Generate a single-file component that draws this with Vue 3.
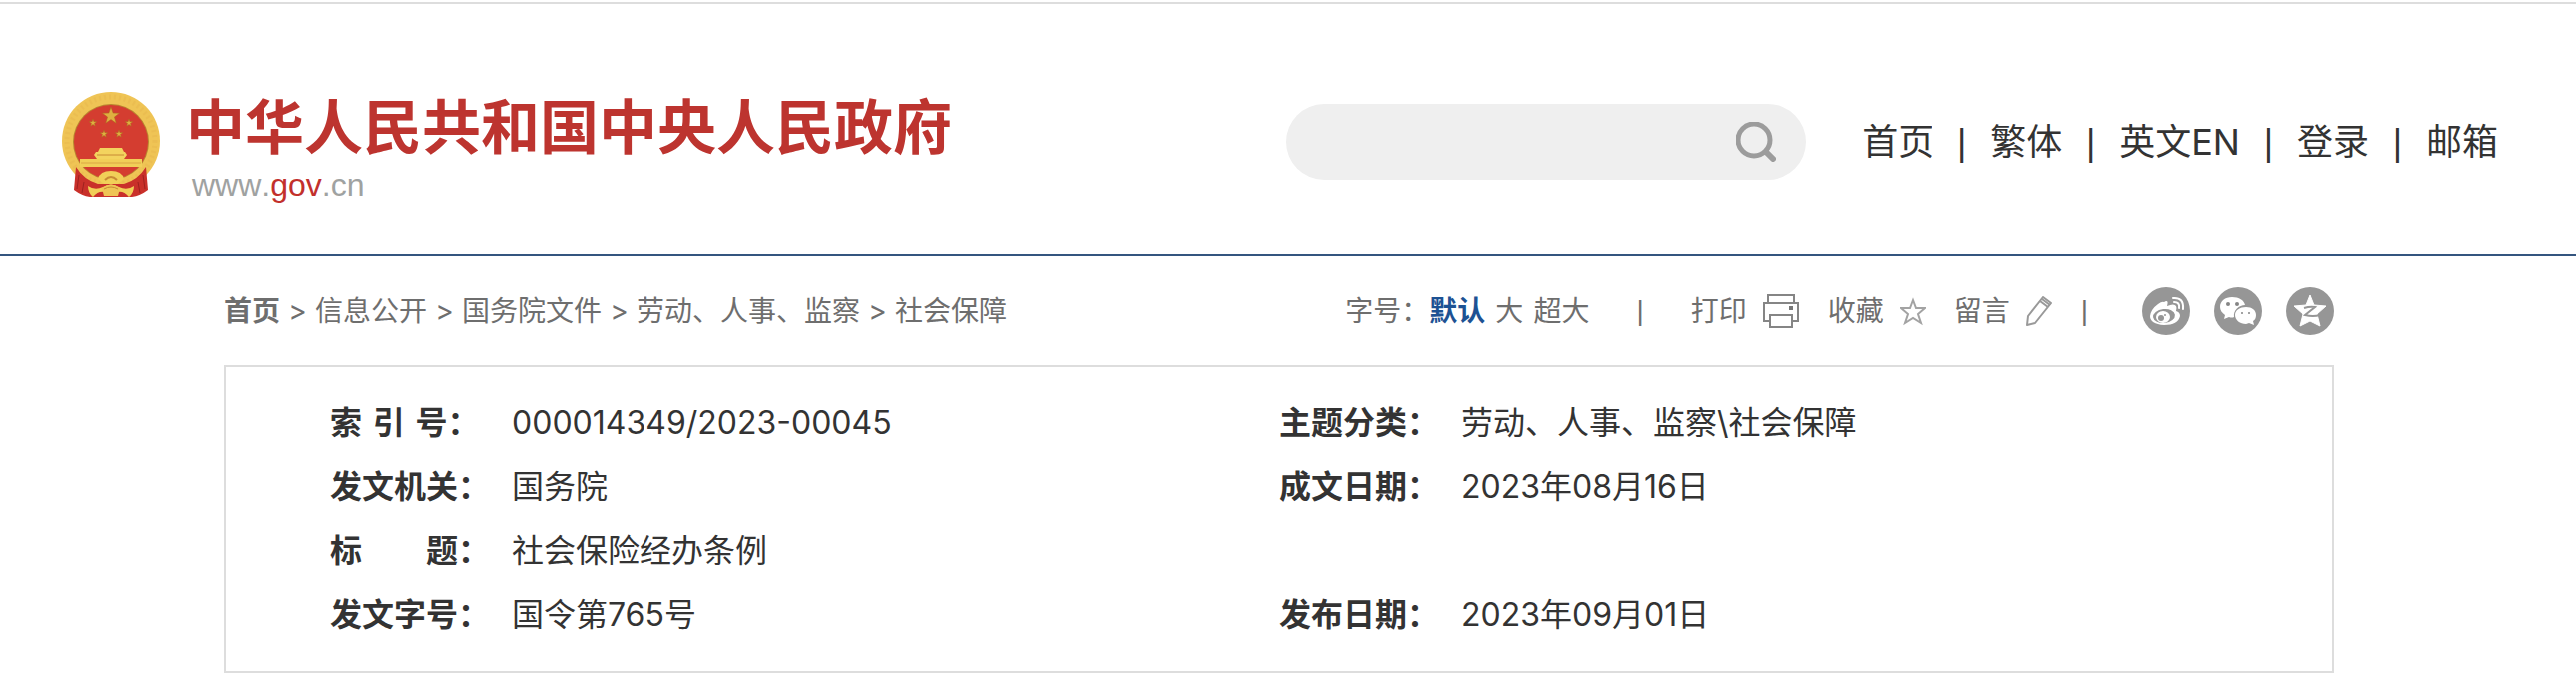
<template>
  <div class="page">
    <header class="header">
      <a class="logo" href="#" aria-label="中华人民共和国中央人民政府">
        <svg class="emblem" viewBox="0 0 98 106" aria-hidden="true">
          <circle cx="49" cy="49" r="49" fill="#efc455" />
          <circle cx="49" cy="49" r="44" fill="none" stroke="#e6b34a" stroke-width="5" stroke-dasharray="2 3" opacity="0.4" />
          <circle cx="49" cy="50" r="38" fill="#b8862f" />
          <circle cx="49" cy="50" r="37" fill="#d43d30" />
          <polygon v-for="(s, i) in stars" :key="i" :points="starPoints(s.x, s.y, s.r)" fill="#dfb040" stroke="#a8661f" stroke-width="0.5" />
          <path d="M38 56 H60 L62 60 H36 Z M34 60 H63 L65 63 L62 67 H35 L32 63 Z" fill="#f3d35e" />
          <path d="M35 63 H62" stroke="#c88a35" stroke-width="1" />
          <path d="M18 67 H80 V75 H18 Z" fill="#f1cf58" />
          <path d="M19 71 H79" stroke="#dba744" stroke-width="1" />
          <path d="M14 75 Q22 88 36 92 H62 Q76 88 84 75 L86 98 Q78 104 70 105 H28 Q20 104 12 98 Z" fill="#c9302a" />
          <path d="M17 83 L15 97 M22 90 L20 101 M81 83 L83 97 M76 90 L78 101" stroke="#9e211f" stroke-width="1" />
          <path d="M36 87 Q38 79 49 79 Q60 79 62 87 L56 92 H42 Z" fill="#f1cf58" />
          <path d="M43 88 Q49 82 55 88" fill="none" stroke="#c88a35" stroke-width="2" />
          <path d="M26 94 Q33 99 41 95 Q49 90 57 95 Q65 99 72 94 Q72 101 67 105 Q62 99 56 100 H42 Q36 99 31 105 Q26 101 26 94 Z" fill="#f1cf58" />
          <path d="M40 96 Q49 89 58 96 L56 104 H42 Z" fill="#efc455" />
          <path d="M42 97 Q49 93 56 97" fill="none" stroke="#c88a35" stroke-width="1" />
        </svg>
        <span class="logo-text">
          <span class="logo-title">中华人民共和国中央人民政府</span>
          <span class="logo-url">www.<b>gov</b>.cn</span>
        </span>
      </a>

      <form class="search" @submit.prevent>
        <input v-model.trim="keyword" type="text" aria-label="搜索" />
        <button type="submit" aria-label="搜索">
          <svg viewBox="0 0 40 40">
            <circle cx="18" cy="18" r="16" fill="none" stroke="#9c9c9c" stroke-width="5" />
            <path d="M30 30 L37 37" stroke="#9c9c9c" stroke-width="6" stroke-linecap="round" />
          </svg>
        </button>
      </form>

      <nav class="nav">
        <template v-for="(item, i) in navList" :key="item">
          <span v-if="i > 0" class="bar">|</span>
          <a href="#">{{ item }}</a>
        </template>
      </nav>
    </header>

    <main class="main">
      <div class="toolbar">
        <div class="crumbs">
          <template v-for="(item, i) in crumbs" :key="item">
            <span v-if="i > 0" class="arrow">&gt;</span>
            <a href="#" :class="{ strong: i === 0 }">{{ item }}</a>
          </template>
        </div>

        <div class="tools">
          <span>字号：</span>
          <div class="sizes">
            <button
              v-for="item in sizes"
              :key="item"
              type="button"
              :class="{ active: item === size }"
              @click="size = item"
            >{{ item }}</button>
          </div>
          <span class="bar bar-first">|</span>
          <div class="actions">
            <button type="button">
              打印
              <svg class="icon-print" viewBox="0 0 36 34">
                <g fill="none" stroke="#858585" stroke-width="2">
                  <path d="M5 9 V1 H31 V9" />
                  <path d="M6 27 H1 V9 H35 V27 H30" />
                  <path d="M7 21 H29 V33 H7 Z" />
                </g>
                <rect x="26" y="12" width="4" height="4" fill="#777" />
              </svg>
            </button>
            <button type="button">
              收藏
              <svg class="icon-small" viewBox="0 0 26 28">
                <path d="M13 3 L16 11 L25 11 L18 17 L21 26 L13 21 L5 26 L8 17 L1 11 L10 11 Z" fill="none" stroke="#a3a3a3" stroke-width="2" />
              </svg>
            </button>
            <button type="button">
              留言
              <svg class="icon-small" viewBox="0 0 26 30">
                <g fill="none" stroke="#999" stroke-width="2" stroke-linejoin="round">
                  <path d="M17 1 L25 7 L9 27 L1 29 L2 20 Z" />
                  <path d="M14 5 L22 11 M16 3 L24 9" />
                </g>
              </svg>
            </button>
          </div>
          <span class="bar bar-last">|</span>
          <div class="share">
            <a href="#" aria-label="微博">
              <svg viewBox="0 0 48 48">
                <circle cx="24" cy="24" r="24" fill="#969696" />
                <path d="M22 15 Q27 12 25 19 Q32 16 34 19 Q35 21 34 24 Q38 25 38 29 Q36 38 22 38 Q8 37 8 29 Q9 22 16 17 Q20 14 22 15 Z" fill="#fff" />
                <ellipse cx="22" cy="29" rx="11" ry="7" fill="#969696" transform="rotate(-7 22 29)" />
                <ellipse cx="21" cy="30" rx="7" ry="6" fill="#fff" />
                <circle cx="19" cy="31" r="3" fill="#969696" />
                <circle cx="23" cy="28" r="1" fill="#969696" />
                <g fill="none" stroke="#fff" stroke-width="2" stroke-linecap="round">
                  <path d="M31 11 Q42 10 41 22" />
                  <path d="M32 15 Q38 15 37 21" />
                </g>
              </svg>
            </a>
            <a href="#" aria-label="微信">
              <svg viewBox="0 0 48 48">
                <circle cx="24" cy="24" r="24" fill="#969696" />
                <path d="M18 10 C11 10 6 14 6 20 C6 23 8 26 11 28 L10 32 L15 30 Q18 31 20 30 C19 23 25 18 31 18 C30 13 25 10 18 10 Z" fill="#fff" />
                <path d="M32 20 C26 20 21 23 21 28 C21 33 26 37 32 37 L35 36 L40 38 L39 34 C41 33 42 31 42 28 C42 23 38 20 32 20 Z" fill="#fff" />
                <g fill="#858585">
                  <circle cx="14" cy="17" r="2" />
                  <circle cx="23" cy="17" r="2" />
                  <circle cx="28" cy="26" r="1" />
                  <circle cx="35" cy="26" r="1" />
                </g>
              </svg>
            </a>
            <a href="#" aria-label="QQ空间">
              <svg viewBox="0 0 48 48">
                <circle cx="24" cy="24" r="24" fill="#969696" />
                <path d="M24 8 L28 18 L40 19 L31 27 L34 39 L24 34 L14 39 L17 27 L8 19 L20 18 Z" fill="#fff" stroke="#fff" stroke-linejoin="round" />
                <path d="M18 21 Q24 19 29 20 L19 28 Q27 30 34 28" fill="none" stroke="#969696" stroke-width="2" />
              </svg>
            </a>
          </div>
        </div>
      </div>

      <div class="info">
        <table>
          <colgroup>
            <col class="col-label" />
            <col />
            <col class="col-label" />
            <col />
          </colgroup>
          <tbody>
            <tr v-for="(row, i) in rows" :key="i">
              <template v-for="(cell, j) in row" :key="j">
                <th scope="row">{{ cell.label }}</th>
                <td :colspan="row.length === 1 ? 3 : 1">{{ cell.value }}</td>
              </template>
            </tr>
          </tbody>
        </table>
      </div>
    </main>
  </div>
</template>

<script setup>
import { ref } from "vue";

const keyword = ref("");
const size = ref("默认");

const navList = ["首页", "繁体", "英文EN", "登录", "邮箱"];
const crumbs = ["首页", "信息公开", "国务院文件", "劳动、人事、监察", "社会保障"];
const sizes = ["默认", "大", "超大"];

const rows = [
  [
    { label: "索\u2004引\u2004号：", value: "000014349/2023-00045" },
    { label: "主题分类：", value: "劳动、人事、监察\\社会保障" },
  ],
  [
    { label: "发文机关：", value: "国务院" },
    { label: "成文日期：", value: "2023年08月16日" },
  ],
  [{ label: "标　　题：", value: "社会保险经办条例" }],
  [
    { label: "发文字号：", value: "国令第765号" },
    { label: "发布日期：", value: "2023年09月01日" },
  ],
];

/* 国徽上的五颗星 */
const stars = [
  { x: 49, y: 24, r: 9 },
  { x: 31, y: 31, r: 4 },
  { x: 67, y: 31, r: 4 },
  { x: 42, y: 42, r: 4 },
  { x: 57, y: 42, r: 4 },
];

const starPoints = (cx, cy, r) => {
  const points = [];
  for (let i = 0; i < 10; i++) {
    const len = i % 2 ? r * 0.4 : r;
    const angle = (Math.PI / 5) * i - Math.PI / 2;
    points.push(`${cx + len * Math.cos(angle)},${cy + len * Math.sin(angle)}`);
  }
  return points.join(" ");
};
</script>

<style>
body {
  background: #fff;
}
</style>

<style scoped>
.page {
  padding-top: 2px;
  font-family: Inter, "Noto Sans CJK SC", sans-serif;
  color: #333;
}
a {
  color: inherit;
  text-decoration: none;
}
button {
  padding: 0;
  border: none;
  background: none;
  font: inherit;
  color: inherit;
  cursor: pointer;
}
svg {
  display: block;
}
.bar {
  font-family: "Liberation Sans", sans-serif;
}

/* 顶部 */
.header {
  display: flex;
  align-items: center;
  padding: 74px 78px 48px 62px;
  border-top: 2px solid #ddd;
  border-bottom: 2px solid #34557f;
}
.logo {
  display: flex;
  align-items: center;
  gap: 26px;
  margin-right: auto;
  padding-top: 6px;
}
.emblem {
  width: 98px;
  height: 106px;
}
.logo-text {
  display: flex;
  flex-direction: column;
  padding-top: 8px;
}
.logo-title {
  font-size: 59px;
  line-height: 72px;
  font-weight: 700;
  color: #bd342f;
  white-space: nowrap;
}
.logo-url {
  padding-left: 6px;
  font-family: "Liberation Sans", sans-serif;
  font-size: 32px;
  line-height: 42px;
  font-kerning: none;
  color: #9fa2a1;
}
.logo-url b {
  font-weight: 400;
  color: #c2302c;
}
.search {
  display: flex;
  align-items: center;
  width: 520px;
  height: 76px;
  margin-right: 56px;
  padding: 0 30px 0 38px;
  box-sizing: border-box;
  border-radius: 38px;
  background: #efefef;
}
.search input {
  flex: 1;
  min-width: 0;
  height: 100%;
  border: none;
  outline: none;
  background: none;
  font: inherit;
  font-size: 32px;
  color: #333;
}
.search svg {
  width: 40px;
  height: 40px;
}
.nav {
  display: flex;
  align-items: baseline;
  font-size: 36px;
  line-height: 52px;
  white-space: nowrap;
}
.nav .bar {
  width: 57px;
  text-align: center;
}

/* 面包屑与工具栏 */
.main {
  padding: 0 242px 14px 224px;
}
.toolbar {
  display: flex;
  align-items: center;
  justify-content: space-between;
  height: 110px;
  font-size: 28px;
  line-height: 40px;
  color: #6e6e6e;
  white-space: nowrap;
}
.crumbs {
  display: flex;
}
.arrow {
  width: 35px;
  text-align: center;
}
.strong {
  font-weight: 700;
}
.tools,
.sizes,
.actions,
.share {
  display: flex;
  align-items: center;
}
.sizes {
  gap: 10px;
}
.sizes .active {
  font-weight: 700;
  color: #1d5293;
}
.actions {
  gap: 29px;
}
.actions button {
  display: flex;
  align-items: center;
  gap: 16px;
}
.bar-first {
  margin: 0 47px;
}
.bar-last {
  margin: 0 54px 0 29px;
}
.icon-print {
  width: 36px;
  height: 34px;
}
.icon-small {
  width: 26px;
  height: 30px;
}
.share {
  gap: 24px;
}
.share svg {
  width: 48px;
  height: 48px;
}

/* 公文信息 */
.info {
  padding: 24px 104px;
  border: 2px solid #ddd;
}
table {
  width: 100%;
  table-layout: fixed;
  border-collapse: collapse;
}
.col-label {
  width: 182px;
}
th,
td {
  height: 64px;
  padding: 0;
  font-size: 32px;
  line-height: 48px;
  text-align: left;
  white-space: nowrap;
}
th {
  font-weight: 700;
}
</style>
